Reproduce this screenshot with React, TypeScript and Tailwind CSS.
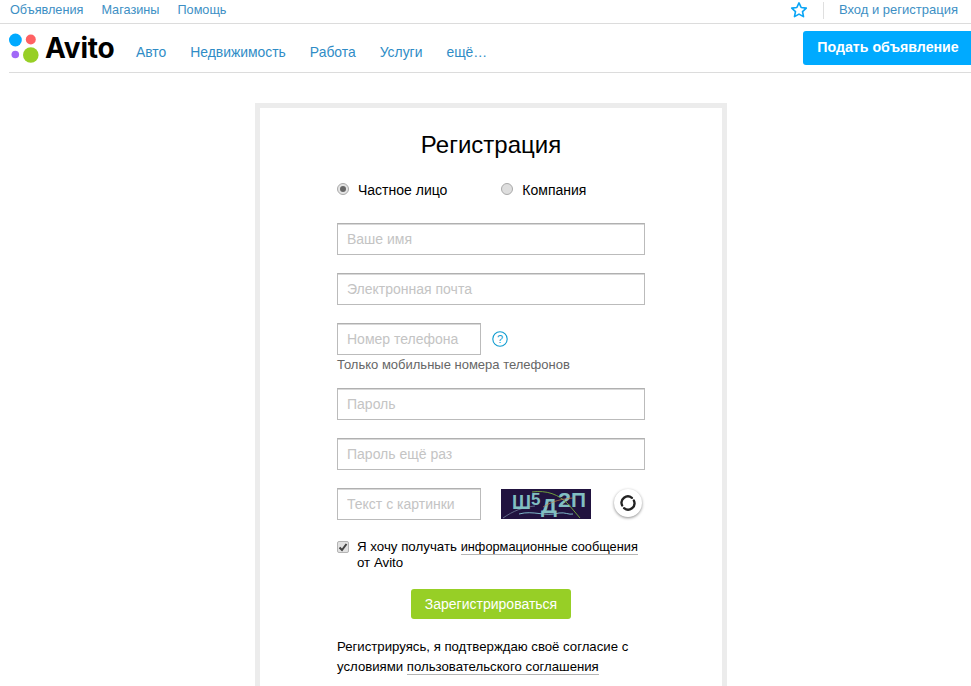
import React from "react";

const topLinks = ["Объявления", "Магазины", "Помощь"];
const navLinks = ["Авто", "Недвижимость", "Работа", "Услуги", "ещё…"];

const inputClass =
  "block h-8 border border-[#bbb] border-t-[#b0b0b0] bg-white px-[9px] text-[14px] text-black shadow-[inset_0_1px_0_#d8d8d8] outline-none placeholder:text-[#c4c4c4]";

const Logo: React.FC = () => (
  <div className="flex w-[106px] items-center gap-[5px]">
    <svg width="31" height="30" viewBox="0 0 31 30" className="shrink-0">
      <circle cx="6.4" cy="7" r="6.4" fill="#00aaff" />
      <circle cx="21.8" cy="6.5" r="5" fill="#ff6163" />
      <circle cx="6.3" cy="21.5" r="3.8" fill="#a169f7" />
      <circle cx="21.8" cy="22" r="7.8" fill="#97cf26" />
    </svg>
    <span className="font-['Inter',sans-serif] text-[28px] font-bold leading-none tracking-[-0.2px] text-black">
      Avito
    </span>
  </div>
);

const Captcha: React.FC = () => (
  <svg width="90" height="30" viewBox="0 0 90 30" className="mt-px shrink-0">
    <rect width="90" height="30" fill="#21133f" />
    <path d="M2 29 C12 22 22 18 34 17" stroke="#6f7f9a" strokeWidth="0.8" fill="none" />
    <path d="M18 25 C32 21 44 28 58 24 C64 23 68 26 72 25" stroke="#7fb6c9" strokeWidth="1" fill="none" />
    <g fontFamily="'Liberation Sans', sans-serif" fontWeight="700" fill="#82bfc2">
      <text x="11" y="20" fontSize="21" textLength="19" lengthAdjust="spacingAndGlyphs">Ш</text>
      <text x="30" y="16" fontSize="17">5</text>
      <text x="40" y="24" fontSize="21" textLength="16" lengthAdjust="spacingAndGlyphs">Д</text>
      <text x="57" y="18" fontSize="21" textLength="13" lengthAdjust="spacingAndGlyphs">2</text>
      <text x="70" y="18" fontSize="21" textLength="15" lengthAdjust="spacingAndGlyphs">П</text>
    </g>
    <path d="M31 3 C45 1 58 5 68 16 L79 29" stroke="#6f9d3c" strokeWidth="1" fill="none" />
    <path d="M42 18 C52 12 60 10 72 9" stroke="#c58a4a" strokeWidth="0.7" fill="none" />
  </svg>
);

const App: React.FC = () => {
  return (
    <div className="h-[686px] overflow-hidden bg-white font-['Liberation_Sans',Arial,sans-serif] text-[14px] text-black">
      {/* top bar */}
      <div className="flex h-6 items-center justify-between border-b border-[#dcdcdc] pb-[3px] pl-[10px] pr-[13px] text-[#3d8fc4]">
        <div className="mt-[2px] flex gap-[18px] text-[12.7px]">
          {topLinks.map((link) => (
            <a key={link}>{link}</a>
          ))}
        </div>
        <div className="flex items-center text-[13px]">
          <svg width="18" height="18" viewBox="0 0 24 24" fill="none" stroke="#0aa5f5" strokeWidth="2.2" strokeLinejoin="round" className="mb-px">
            <path d="M12 2.5l2.9 6.2 6.8.8-5 4.6 1.3 6.7-6-3.3-6 3.3 1.3-6.7-5-4.6 6.8-.8z" />
          </svg>
          <span className="mx-[15px] h-[17px] w-px bg-[#dfdfdf]" />
          <a>Вход и регистрация</a>
        </div>
      </div>

      {/* main nav */}
      <div className="ml-[9px] flex h-[49px] items-start border-b border-[#dcdcdc]">
        <div className="mt-[9px]">
          <Logo />
        </div>
        <div className="ml-[21px] mt-[20px] flex gap-[24px] text-[13.9px] leading-4 text-[#2f8cc6]">
          {navLinks.map((link) => (
            <a key={link}>{link}</a>
          ))}
        </div>
        <button className="ml-auto mt-[7px] h-[34px] w-[168px] rounded-l-[3px] bg-[#00aaff] pl-[2px] text-[14.2px] font-bold text-white">
          Подать объявление
        </button>
      </div>

      {/* form card */}
      <div className="ml-[255px] mt-[30px] w-[472px] border-[5px] border-[#ececec] pb-10">
        <h1 className="pt-[23px] text-center text-[24px] font-normal leading-7">Регистрация</h1>

        <div className="ml-[77px] w-[308px]">
          <div className="mt-[21px] flex h-5 items-center">
            <span className="mb-[3px] flex h-3 w-3 items-center justify-center rounded-full border border-[#aaa] bg-[#e4e4e4]">
              <span className="h-[6px] w-[6px] rounded-full bg-[#666]" />
            </span>
            <span className="ml-[9px]">Частное лицо</span>
            <span className="mb-[3px] ml-[54px] h-3 w-3 rounded-full border border-[#aaa] bg-[#dedede]" />
            <span className="ml-[9px]">Компания</span>
          </div>

          <input className={`${inputClass} mt-[23px] w-full`} placeholder="Ваше имя" />
          <input className={`${inputClass} mt-[18px] w-full`} placeholder="Электронная почта" />

          <div className="mt-[18px] flex items-center">
            <input className={`${inputClass} w-[144px]`} placeholder="Номер телефона" />
            <svg width="16" height="16" viewBox="0 0 16 16" className="ml-[11px]" fill="none">
              <circle cx="8" cy="8" r="7.2" stroke="#0e9bd0" strokeWidth="1.1" />
              <text x="8" y="12" textAnchor="middle" fontSize="11" fill="#0e9bd0" fontFamily="'Liberation Sans', sans-serif">?</text>
            </svg>
          </div>
          <p className="mt-[2px] text-[13px] leading-[16px] text-[#666]">Только мобильные номера телефонов</p>

          <input className={`${inputClass} mt-[15px] w-full`} placeholder="Пароль" />
          <input className={`${inputClass} mt-[18px] w-full`} placeholder="Пароль ещё раз" />

          <div className="mt-[18px] flex items-start">
            <input className={`${inputClass} w-[144px]`} placeholder="Текст с картинки" />
            <div className="ml-5">
              <Captcha />
            </div>
            <button className="ml-[23px] mt-px flex h-[28px] w-[28px] items-center justify-center rounded-full bg-white shadow-[0_1px_3px_rgba(0,0,0,0.45)]">
              <svg width="18" height="18" viewBox="0 0 17 17" fill="none" stroke="#222" strokeWidth="2.2" strokeLinecap="round">
                <path d="M3 10.8A6 6 0 0 1 12.2 3.6" />
                <path d="M14 6.2A6 6 0 0 1 4.8 13.4" />
              </svg>
            </button>
          </div>

          <div className="mt-[19px] flex items-start">
            <span className="mt-[2px] flex h-[12px] w-[12px] shrink-0 items-center justify-center rounded-[2px] border border-[#b4b4b4] bg-[#e2e2e2]">
              <svg width="10" height="10" viewBox="0 0 10 10" fill="none" stroke="#444" strokeWidth="2">
                <path d="M1.5 5.5L4 8l4.5-6" />
              </svg>
            </span>
            <p className="ml-2 whitespace-nowrap text-[13.3px] leading-[16px]">
              Я хочу получать{" "}
              <a className="border-b border-[#b5b5b5] text-[12.8px]">информационные сообщения</a>
              <br />
              от Avito
            </p>
          </div>

          <button className="mx-auto mt-[18px] block h-[30px] w-[160px] rounded-[3px] bg-[#97cf26] text-[14px] text-white">
            Зарегистрироваться
          </button>

          <p className="mt-[18px] whitespace-nowrap text-[13.2px] leading-[20px]">
            Регистрируясь, я подтверждаю своё согласие с
            <br />
            условиями <a className="border-b border-[#b5b5b5]">пользовательского соглашения</a>
          </p>
        </div>
      </div>
    </div>
  );
};

export default App;
